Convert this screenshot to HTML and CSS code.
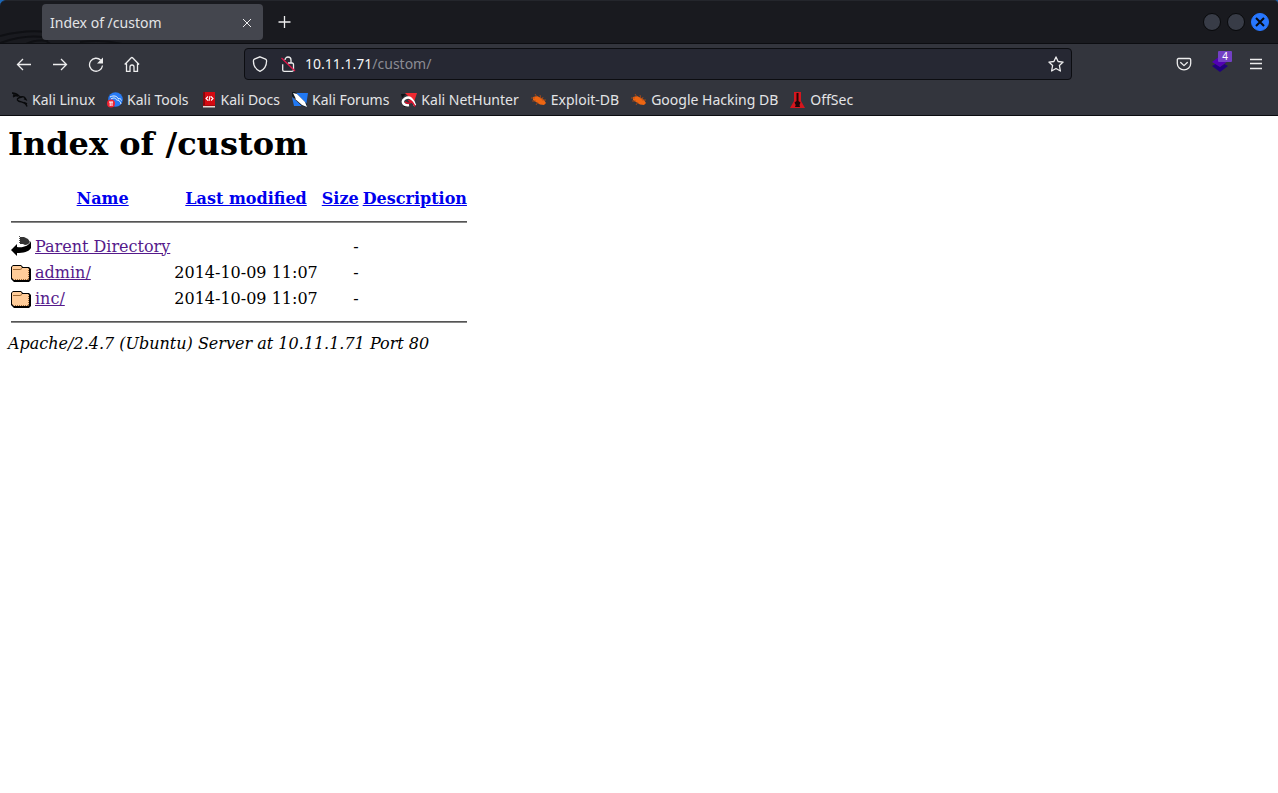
FILE: index.html
```html
<!DOCTYPE html>
<html lang="en">
<head>
<meta charset="utf-8">
<title>Index of /custom</title>
<link rel="stylesheet" href="styles.css">
</head>
<body>
<header class="chrome">
  <div class="titlebar">
    <svg class="dragon" viewBox="0 0 180 42" aria-hidden="true"><path d="M0 35C16 31 30 29 46 31M0 42C18 36 34 34 46 37M26 43C32 40 40 39 48 40M44 38l6 5M80 41C95 39 110 40 122 43"/></svg>
    <div class="tab">
      <span class="tab-title">Index of /custom</span>
      <button class="icon-button tab-close" aria-label="Close tab"><svg width="10" height="10" viewBox="0 0 10 10"><path d="M1 1l8 8M9 1L1 9"/></svg></button>
    </div>
    <button class="icon-button new-tab" aria-label="New tab"><svg width="14" height="14" viewBox="0 0 14 14"><path d="M6.500 1v12M.5 7h12"/></svg></button>
    <div class="window-buttons">
      <button class="window-button" aria-label="Minimize"></button>
      <button class="window-button" aria-label="Maximize"></button>
      <button class="window-button window-close" aria-label="Close window"><svg width="10" height="10" viewBox="0 0 10 10"><path d="M1 1l8 8M9 1L1 9"/></svg></button>
    </div>
  </div>
  <div class="navbar">
    <nav class="nav-buttons" aria-label="Navigation">
      <button class="icon-button" aria-label="Back"><svg width="16" height="16" viewBox="0 0 16 16"><path d="M15 8.500H1.500M7 3L1.500 8.500 7 14"/></svg></button>
      <button class="icon-button" aria-label="Forward"><svg width="16" height="16" viewBox="0 0 16 16"><path d="M1 8.500h13.500M9 3l5.500 5.500L9 14"/></svg></button>
      <button class="icon-button" aria-label="Reload"><svg width="16" height="16" viewBox="0 0 16 16"><path d="M14.500 9.500A6.500 6.500 0 1 1 12.800 4.300"/><path class="solid" d="M15 1.500v6H9z"/></svg></button>
      <button class="icon-button" aria-label="Home"><svg width="16" height="16" viewBox="0 0 16 16"><path d="M.7 8.500L7 2c.6-.6 1.200-.6 1.800 0l6.300 6.500M2.500 7.500v7.800h3.500V11a2 2 0 0 1 4 0v4.300h3.500V7.500"/></svg></button>
    </nav>
    <div class="urlbar">
      <button class="icon-button" aria-label="Tracking protection"><svg width="16" height="16" viewBox="0 0 16 16"><path d="M8 .8l5.600 2.400c.8.400 1 .8 1 1.700-.1 4.600-2 8.400-6.600 10.400C3.400 13.300 1.500 9.500 1.400 4.900c0-.9.2-1.300 1-1.700z"/></svg></button>
      <button class="icon-button" aria-label="Connection is not secure"><svg width="16" height="16" viewBox="0 0 16 16"><path d="M5 4a3 3 0 0 1 6 0v3M2.700 8.200V14c0 .8.500 1.300 1.500 1.300h8c.8 0 1.300-.5 1.300-1.500V8.500c0-1-.5-1.500-1.500-1.500H8"/><path class="slash" d="M1.500 2l13.500 13"/></svg></button>
      <div class="url" role="textbox" aria-label="Address" tabindex="0"><span class="host">10.11.1.71</span>/custom/</div>
      <button class="icon-button" aria-label="Bookmark this page"><svg width="16" height="16" viewBox="0 0 16 16"><path d="M8 .9l2.100 4.600 5 .6-3.700 3.400 1 5.500L8 12.500 3.600 15l1-5.500L.9 6.100l5-.6z" stroke-linejoin="round"/></svg></button>
    </div>
    <div class="actions">
      <button class="icon-button" aria-label="Save to Pocket"><svg width="16" height="16" viewBox="0 0 16 16"><path d="M2.600 2.500h10.800c.8 0 1.300.5 1.300 1.300V7.500a6.700 6.300 0 0 1-13.400 0V3.800c0-.8.500-1.300 1.300-1.300zM4.700 6.500L8 9.600l3.300-3.100" stroke-linejoin="round" stroke-linecap="round"/></svg></button>
      <button class="icon-button extension" aria-label="Extension, 4 items"><svg width="16" height="16" viewBox="0 0 16 16"><path fill="#21007f" stroke="none" d="M0 10l3.500-2L8 11l4.500-3 3.500 2-8 6z"/><path fill="#5200b5" stroke="none" d="M8 0l8 5-8 6-8-5z"/></svg><span class="badge">4</span></button>
      <button class="icon-button" aria-label="Menu"><svg width="16" height="16" viewBox="0 0 16 16"><path d="M2 3.500h12M2 7.500h12M2 12.500h12"/></svg></button>
    </div>
  </div>
  <nav class="bookmarks" aria-label="Bookmarks">
    <a href="#"><svg width="16" height="16" viewBox="0 0 16 16"><path fill="none" stroke="#08090b" stroke-width="1.400" d="M0 1c3 0 5 1 7 3M1 5c3-2 6-1.500 8 .2C5 5.500 4.500 8 6.500 9c3 1.500 7 .5 8.500 5.500M8 5c3-1 5 0 6 2.500L12 6.500M1 3l5 1M12 10.500l3 1.500"/></svg>Kali Linux</a>
    <a href="#"><svg width="16" height="16" viewBox="0 0 16 16"><circle cx="8.500" cy="7.500" r="7.300" fill="#287bf5"/><path d="M3 5c4-2 7-1 8.500 2M4 7c3-2 5-.5 5 0 0 2 4 0 5 5M11 7c2-1 3 0 3.500 1.500" fill="none" stroke="#e8f4ff"/><circle cx="4" cy="11.500" r="4" fill="#f02232"/><path d="M2 10h4M3.200 10v4M5 10v4" stroke="#fff"/></svg>Kali Tools</a>
    <a href="#"><svg width="16" height="16" viewBox="0 0 16 16"><path fill="#d50a12" d="M3 0h11v13H3z"/><path fill="#89070c" d="M2 0h2v13H2z"/><path fill="#a50a10" d="M2 13h12v1H2z"/><path fill="#e8d8d4" d="M2 14h12v1.500H2z"/><path d="M7 4.500L5 6.500l2 2M10 4.500l2 2-2 2M9 4L8 9" fill="none" stroke="#fff" stroke-width="1.100"/></svg>Kali Docs</a>
    <a href="#"><svg width="16" height="16" viewBox="0 0 16 16"><path fill="#2178f2" d="M4 1h12l-2 13zM0 5l10 9H2z"/><path fill="#111820" d="M0 0h3l12 12-1 3-4-1L0 4z"/><path fill="#fff" d="M1 1l4 1 8 8 2 5-5-2-6-6zM2 6l6 3 2 4z"/></svg>Kali Forums</a>
    <a href="#"><svg width="16" height="16" viewBox="0 0 16 16"><path fill="#111317" d="M0 2h5L1 6zM0 9l7 6H3z"/><path fill="#ef2930" d="M4 1h12l-3 9z"/><path fill="none" stroke="#fff" stroke-width="2.500" d="M8 13C2 14 0 9 4 6.500c5-3 8 1 10 7"/><path fill="none" stroke="#d5122d" stroke-width="1.500" d="M4 10l3 1.500 3-1L8 8.500c3-1 4 3 6 6"/></svg>Kali NetHunter</a>
    <a href="#"><svg width="16" height="16" viewBox="0 0 16 16"><path fill="#ed6613" d="M2 5l4-1 4 2 3 2 2 3-2 2-4-.5L5 10 2 8z"/><path d="M0 6h4M1 9h4M4 2l2 3M9 3l1 4M12 5l-1 3M15 8h-4M5 13l2-3" stroke="#b94d13" stroke-width=".8"/></svg>Exploit-DB</a>
    <a href="#"><svg width="16" height="16" viewBox="0 0 16 16"><path fill="#ed6613" d="M2 5l4-1 4 2 3 2 2 3-2 2-4-.5L5 10 2 8z"/><path d="M0 6h4M1 9h4M4 2l2 3M9 3l1 4M12 5l-1 3M15 8h-4M5 13l2-3" stroke="#b94d13" stroke-width=".8"/></svg>Google Hacking DB</a>
    <a href="#"><svg width="16" height="16" viewBox="0 0 16 16"><path fill="#d5161d" d="M4 0h7v9l4 7H0l4-7z"/><path fill="#210507" d="M6.500 1h2v8l2 1.500-1 2.500.5 2H5l.7-2-1.200-2.500 2-1.500z"/></svg>OffSec</a>
  </nav>
</header>
<main class="page">
  <h1>Index of /custom</h1>
  <table class="listing">
    <thead>
      <tr><th class="icon-cell"></th><th><a href="#">Name</a></th><th><a href="#">Last modified</a></th><th><a href="#">Size</a></th><th><a href="#">Description</a></th></tr>
    </thead>
    <tbody>
      <tr><td colspan="5"><hr></td></tr>
      <tr><td class="icon-cell"><svg width="20" height="22" viewBox="0 0 20 22"><path d="M0 15l6-6v3c6 1 12-1 14-6v7c-2 4-8 5-14 5v3z"/><path fill="#333" d="M9 2h4l4 2 2 3c-1 2-3 3-5 3l-2-1H9z"/><path stroke="#555" stroke-dasharray="1 1" d="M8.500 1v8"/></svg></td><td><a class="visited" href="#">Parent Directory</a></td><td></td><td class="right">-</td><td></td></tr>
      <tr><td class="icon-cell"><svg width="20" height="22" viewBox="0 0 20 22"><use href="#folder"/></svg></td><td><a class="visited" href="#">admin/</a></td><td class="right">2014-10-09 11:07</td><td class="right">-</td><td></td></tr>
      <tr><td class="icon-cell"><svg width="20" height="22" viewBox="0 0 20 22"><g id="folder"><path d="M2 4h8l2 2h6l2 2v11l-2 2H3l-3-3V6z"/><path fill="#fc9" d="M2 5h8l1 2h6l1 1v10l-1 1H3l-2-2V6z"/><path d="M2 8.500h7l2-1" fill="none" stroke="#963"/><path d="M4 18.500h13M17.500 9v9" fill="none" stroke="#963" stroke-dasharray="1 1"/></g></svg></td><td><a class="visited" href="#">inc/</a></td><td class="right">2014-10-09 11:07</td><td class="right">-</td><td></td></tr>
      <tr><td colspan="5"><hr></td></tr>
    </tbody>
  </table>
  <address>Apache/2.4.7 (Ubuntu) Server at 10.11.1.71 Port 80</address>
</main>
</body>
</html>
```
FILE: styles.css
```css
* { box-sizing: border-box; }
body { margin: 0; background: #fff; color: #000; font: 16px "DejaVu Serif", serif; }
svg { display: block; }
.chrome { background: linear-gradient(#1b66b5 0 8px, #33353d 8px); border-bottom: 1px solid #0b0c10; color: #e3e4e6; font: 14px/20px "Noto Sans", sans-serif; }
.titlebar { position: relative; display: flex; align-items: center; height: 44px; padding: 0 9px 0 42px; background: #191a1f; border-top: 1px solid #24262c; border-bottom: 1px solid #0c0d11; border-radius: 6px 4px 0 0; }
.dragon { position: absolute; left: 0; top: 0; width: 180px; height: 42px; fill: none; stroke: #0f1014; stroke-width: 2; }
.tab { position: relative; display: flex; align-items: center; justify-content: space-between; width: 221px; height: 36px; padding: 2px 8px 0; background: #44464e; border-radius: 4px; }
.icon-button { display: flex; align-items: center; justify-content: center; width: 16px; height: 16px; padding: 0; border: 0; background: none; color: inherit; }
.icon-button svg { flex: none; fill: none; stroke: #ededee; stroke-width: 1.3; }
.tab-close svg { stroke-width: 1; }
.icon-button .solid { fill: #ededee; stroke: none; }
.icon-button .slash { stroke: #e2164a; }
.new-tab { margin-left: 14px; }
.window-buttons { display: flex; gap: 6px; margin-left: auto; }
.window-button { display: flex; align-items: center; justify-content: center; width: 18px; height: 18px; padding: 0; border: 1px solid #08090b; border-radius: 50%; background: #383c47; }
.window-close { border-color: #2777ff; background: #2777ff; }
.window-close svg { flex: none; stroke: #08090b; stroke-width: 2; }
.navbar { display: flex; align-items: center; height: 40px; padding: 0 14px 0 16px; }
.nav-buttons { display: flex; gap: 20px; }
.urlbar { display: flex; align-items: center; gap: 12px; flex: 1; height: 32px; margin: 0 104px; padding: 0 7px; background: #262833; border: 1px solid #0c0d11; border-radius: 4px; }
.url { flex: 1; margin-left: -3px; color: #8b8c93; font-size: 14px; white-space: nowrap; }
.host { color: #f5f5f6; }
.actions { display: flex; gap: 20px; }
.extension { position: relative; }
.badge { position: absolute; left: 6px; top: -5px; width: 14px; height: 11px; background: #7340c4; border-radius: 1px; color: #fff; font: 10px/11px "Noto Sans", sans-serif; text-align: center; }
.bookmarks { display: flex; align-items: center; gap: 12px; height: 31px; padding: 0 12px; }
.bookmarks a { display: flex; align-items: center; gap: 4px; color: inherit; text-decoration: none; white-space: nowrap; }
.page { padding: 8px; }
h1 { margin: 0 0 20px; font-size: 32px; line-height: 40px; }
.listing { border-spacing: 2px; }
.listing th, .listing td { padding: 1px; line-height: 19px; vertical-align: middle; }
.icon-cell { width: 22px; height: 24px; }
.listing a { color: #00e; text-decoration: underline; }
.listing a.visited { color: #551a8b; }
.right { text-align: right; }
hr { height: 2px; margin: 8px 0; border: 0; border-top: 1px solid #555; border-bottom: 1px solid #888; }
address { font-style: italic; line-height: 19px; }
```
